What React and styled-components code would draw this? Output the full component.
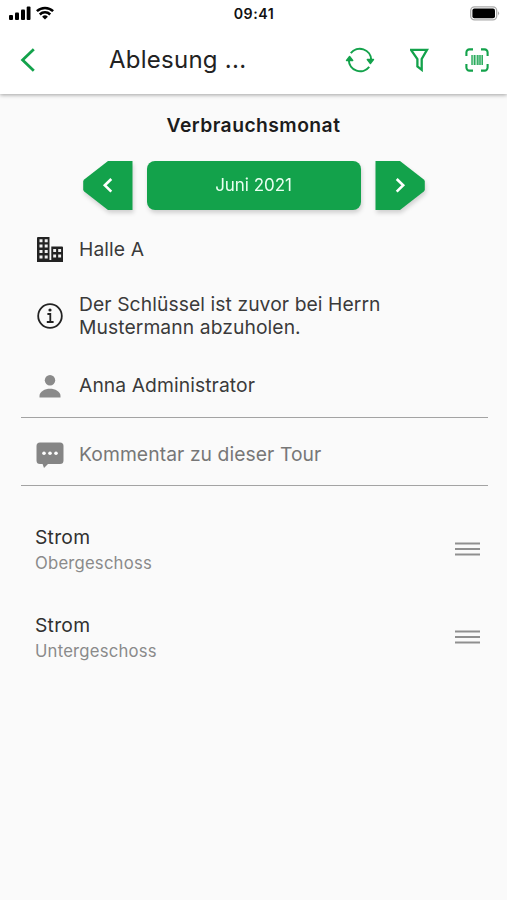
import React from "react";
import styled, { createGlobalStyle } from "styled-components";

const green = "#13a24b";

const GlobalStyle = createGlobalStyle`
    * {
        box-sizing: border-box;
    }
    body {
        margin: 0;
        background: #fafafa;
        font-family: Inter, "Liberation Sans", sans-serif;
    }
    svg {
        display: block;
        flex-shrink: 0;
    }
    button {
        border: none;
        padding: 0;
        background: none;
        font: inherit;
    }
`;

const Screen = styled.div`
    min-height: 900px;
    background: #fafafa;
    color: #333;
`;

const Top = styled.header`
    height: 94px;
    background: #fff;
    box-shadow: 0 1px 4px rgba(0, 0, 0, 0.36);
`;

const StatusBar = styled.div`
    display: grid;
    grid-template-columns: 1fr auto 1fr;
    align-items: center;
    height: 27px;
    padding: 0 7px 0 9px;
`;

const Signals = styled.div`
    display: flex;
    gap: 5px;
    margin-top: -2px;
`;

const Time = styled.span`
    margin-left: -1px;
    font-size: 14.2px;
    font-weight: 600;
    letter-spacing: 0.5px;
    color: #111;
`;

const Battery = styled.div`
    justify-self: end;
    margin-top: -1px;
`;

const NavBar = styled.nav`
    display: flex;
    align-items: center;
    height: 66px;
    padding: 0 18px 0 20px;
`;

const Title = styled.h1`
    flex: 1;
    margin: -1px 0 0 73px;
    font-size: 24px;
    font-weight: 400;
    letter-spacing: 0.25px;
    white-space: nowrap;
    color: #222;
`;

const Actions = styled.div`
    display: flex;
    align-items: center;
    gap: 35px;
`;

const Heading = styled.h2`
    margin: 0;
    padding-top: 19px;
    font-size: 19.3px;
    line-height: 24px;
    font-weight: 600;
    letter-spacing: 0.45px;
    text-align: center;
    color: #1c1c1c;
`;

const MonthPicker = styled.div`
    display: flex;
    justify-content: center;
    gap: 14px;
    margin-top: 24px;
    filter: drop-shadow(1px 3px 2px rgba(0, 0, 0, 0.16));
`;

const Month = styled.button`
    width: 214px;
    height: 49px;
    padding-bottom: 1px;
    border-radius: 8px;
    background: ${green};
    color: #e9fff1;
    font-size: 17px;
    letter-spacing: -0.05px;
`;

const InfoRow = styled.div`
    display: flex;
    align-items: center;
    height: ${(props) => props.$height}px;
    margin: 0 19px 0 21px;
    padding: ${(props) => props.$drop || 0}px 0 0 14px;
    border-bottom: ${(props) => (props.$line ? "1.5px solid #a3a3a3" : "none")};
`;

const IconBox = styled.div`
    display: flex;
    justify-content: center;
    width: 29px;
    margin-right: 15px;
`;

const Text = styled.p`
    margin: 0;
    font-size: 19.3px;
    line-height: 23.5px;
    letter-spacing: 0.08px;
    color: ${(props) => (props.$muted ? "#777" : "#3a3a3a")};
`;

const MeterList = styled.ul`
    list-style: none;
    margin: 19px 0 0;
    padding: 0;
`;

const Meter = styled.li`
    display: flex;
    align-items: center;
    justify-content: space-between;
    height: 88px;
    padding: 0 27px 0 35px;
`;

const MeterLabel = styled.div`
    padding-top: 2px;
`;

const MeterName = styled.div`
    font-size: 19.3px;
    line-height: 25px;
    letter-spacing: 0.25px;
    color: #303030;
`;

const MeterPlace = styled.div`
    padding-top: 1px;
    font-size: 16.7px;
    line-height: 25px;
    letter-spacing: 0.2px;
    color: #8a8a8a;
`;

const SignalIcon = () => (
    <svg width="22" height="14" viewBox="0 0 22 14" fill="#000">
        <rect x="0" y="9" width="4" height="5" rx="1" />
        <rect x="6" y="6.5" width="4" height="7.5" rx="1" />
        <rect x="12" y="3.5" width="4" height="10.5" rx="1" />
        <rect x="17.7" y="0.5" width="3.8" height="13.5" rx="1" />
    </svg>
);

const WifiIcon = () => (
    <svg width="18" height="14" viewBox="0 0 18 14" fill="none" stroke="#000" strokeWidth="2.5">
        <path d="M0.9 5.2a11.6 11.6 0 0 1 16.2 0" />
        <path d="M3.8 8.5a7.4 7.4 0 0 1 10.4 0" />
        <path d="M9 13.5 6.1 10.7a4.1 4.1 0 0 1 5.8 0z" fill="#000" stroke="none" />
    </svg>
);

const BatteryIcon = () => (
    <svg width="30" height="15" viewBox="0 0 30 15">
        <rect x="0.7" y="0.9" width="26" height="13" rx="3.8" fill="#fff" stroke="#aaa" strokeWidth="1.3" />
        <rect x="2.4" y="2.6" width="22.6" height="9.6" rx="2" fill="#000" />
        <path d="M28 5.2q2.2 2.1 0 4.4z" fill="#aaa" />
    </svg>
);

const BackIcon = () => (
    <svg width="16" height="24" viewBox="0 0 16 24" fill="none" stroke={green} strokeWidth="2.8">
        <path d="M13.8 1.2 2.6 12l11.2 10.8" />
    </svg>
);

const SyncIcon = () => (
    <svg width="30" height="28" viewBox="0 0 30 28" fill="none" stroke={green} strokeWidth="2">
        <path d="M5.8 7.2A11.4 11.4 0 0 1 26.2 14" />
        <path d="M24.2 20.8A11.4 11.4 0 0 1 3.8 14" />
        <path d="M22.3 13.5h6.2l-3.1 4z" fill={green} strokeWidth="1.4" strokeLinejoin="round" />
        <path d="M1.5 14.5h6.2l-3.1-4z" fill={green} strokeWidth="1.4" strokeLinejoin="round" />
    </svg>
);

const FilterIcon = () => (
    <svg width="20" height="24" viewBox="0 0 20 24" fill="none" stroke={green} strokeWidth="2.3">
        <path d="M1 1.8h16L11.7 11v10.8l-4.3-3.4V11z" />
    </svg>
);

const BarcodeIcon = () => (
    <svg width="24" height="24" viewBox="0 0 24 24" fill="none" stroke={green}>
        <path
            d="M1.4 8V4.4a3 3 0 0 1 3-3H8M16 1.4h3.6a3 3 0 0 1 3 3V8M22.6 16v3.6a3 3 0 0 1-3 3H16M8 22.6H4.4a3 3 0 0 1-3-3V16"
            strokeWidth="2.1"
        />
        <rect x="6.5" y="7" width="11" height="10" fill={green} fillOpacity="0.35" stroke="none" />
        <path d="M7 7v10M9.7 7v10M12.8 7v10M15 7v10M17.3 7v10" strokeWidth="1.1" />
    </svg>
);

const ArrowShape = ({ flip }) => (
    <svg width="50" height="49" viewBox="0 0 50 49" transform={flip ? "scale(-1 1)" : undefined}>
        <path d="M25 0H49.5V49H25L1.2 30.5L0.2 29V20L1.2 18.5Z" fill={green} />
        <path d="M28.3 18 21.8 24.300l6.500 6.300" fill="none" stroke="#fff" strokeWidth="2.6" />
    </svg>
);

const BuildingIcon = () => (
    <svg width="26" height="25" viewBox="0 0 26 25">
        <path d="M1 0h11.5v25H0V1a1 1 0 0 1 1-1zM14.3 9.5H25a1 1 0 0 1 1 1V25H14.3z" fill="#222" />
        <path
            d="M2.5 2.2h3v3h-3zM7.7 2.2h3v3h-3zM2.5 7.6h3v3h-3zM7.7 7.6h3v3h-3zM2.5 13h3v3h-3zM7.7 13h3v3h-3zM2.5 18.4h3v3h-3zM7.7 18.4h3v3h-3zM16.2 12h2.9v2.9h-2.9zM21.2 12h2.9v2.9h-2.9zM16.2 17.5h2.9v2.9h-2.9zM21.2 17.5h2.9v2.9h-2.9z"
            fill="#f0f0f0"
        />
        <path d="M12 24h3" stroke="#222" strokeWidth="2" />
    </svg>
);

const InfoIcon = () => (
    <svg width="26" height="26" viewBox="0 0 26 26" fill="none" stroke="#222" strokeWidth="1.8">
        <circle cx="13" cy="13" r="11.8" />
        <path d="M10.4 11h2.9v7.8M9.8 19h6.8" />
        <circle cx="13" cy="7" r="1.6" fill="#222" stroke="none" />
    </svg>
);

const PersonIcon = () => (
    <svg width="22" height="23" viewBox="0 0 22 23" fill="#8a8a8a">
        <circle cx="11" cy="5.3" r="5.2" />
        <path d="M0.5 22.4v-1.5C0.5 16.4 6 13.7 11 13.7s10.5 2.7 10.5 7.2v1.5z" />
    </svg>
);

const CommentIcon = () => (
    <svg width="28" height="26" viewBox="0 0 28 26">
        <path d="M4 0.5h20a3.5 3.5 0 0 1 3.5 3.5v14.5A3.5 3.5 0 0 1 24 22H12l-4 4L6.6 22H4A3.5 3.5 0 0 1 .5 18.5V4A3.5 3.5 0 0 1 4 .5z" fill="#858585" />
        <circle cx="8" cy="11.2" r="1.8" fill="#fff" />
        <circle cx="14" cy="11.2" r="1.8" fill="#fff" />
        <circle cx="20" cy="11.2" r="1.8" fill="#fff" />
    </svg>
);

const DragIcon = () => (
    <svg width="25" height="14" viewBox="0 0 25 14" stroke="#8f8f8f" strokeWidth="2">
        <path d="M0 1.5h25M0 7h25M0 12.4h25" />
    </svg>
);

const meters = [
    { name: "Strom", place: "Obergeschoss" },
    { name: "Strom", place: "Untergeschoss" },
];

const App = () => {
    return (
        <Screen>
            <GlobalStyle />
            <Top>
                <StatusBar>
                    <Signals>
                        <SignalIcon />
                        <WifiIcon />
                    </Signals>
                    <Time>09:41</Time>
                    <Battery><BatteryIcon /></Battery>
                </StatusBar>
                <NavBar>
                    <button><BackIcon /></button>
                    <Title>Ablesung ...</Title>
                    <Actions>
                        <SyncIcon />
                        <FilterIcon />
                        <BarcodeIcon />
                    </Actions>
                </NavBar>
            </Top>

            <Heading>Verbrauchsmonat</Heading>
            <MonthPicker>
                <button><ArrowShape /></button>
                <Month>Juni 2021</Month>
                <button><ArrowShape flip /></button>
            </MonthPicker>

            <InfoRow $height={78} $drop={1}>
                <IconBox><BuildingIcon /></IconBox>
                <Text>Halle A</Text>
            </InfoRow>
            <InfoRow $height={56}>
                <IconBox><InfoIcon /></IconBox>
                <Text>Der Schlüssel ist zuvor bei Herrn<br />Mustermann abzuholen.</Text>
            </InfoRow>
            <InfoRow $height={74} $drop={11} $line>
                <IconBox><PersonIcon /></IconBox>
                <Text>Anna Administrator</Text>
            </InfoRow>
            <InfoRow $height={68} $drop={6} $line>
                <IconBox><CommentIcon /></IconBox>
                <Text $muted>Kommentar zu dieser Tour</Text>
            </InfoRow>

            <MeterList>
                {meters.map((meter) => (
                    <Meter key={meter.place}>
                        <MeterLabel>
                            <MeterName>{meter.name}</MeterName>
                            <MeterPlace>{meter.place}</MeterPlace>
                        </MeterLabel>
                        <DragIcon />
                    </Meter>
                ))}
            </MeterList>
        </Screen>
    );
};

export default App;
